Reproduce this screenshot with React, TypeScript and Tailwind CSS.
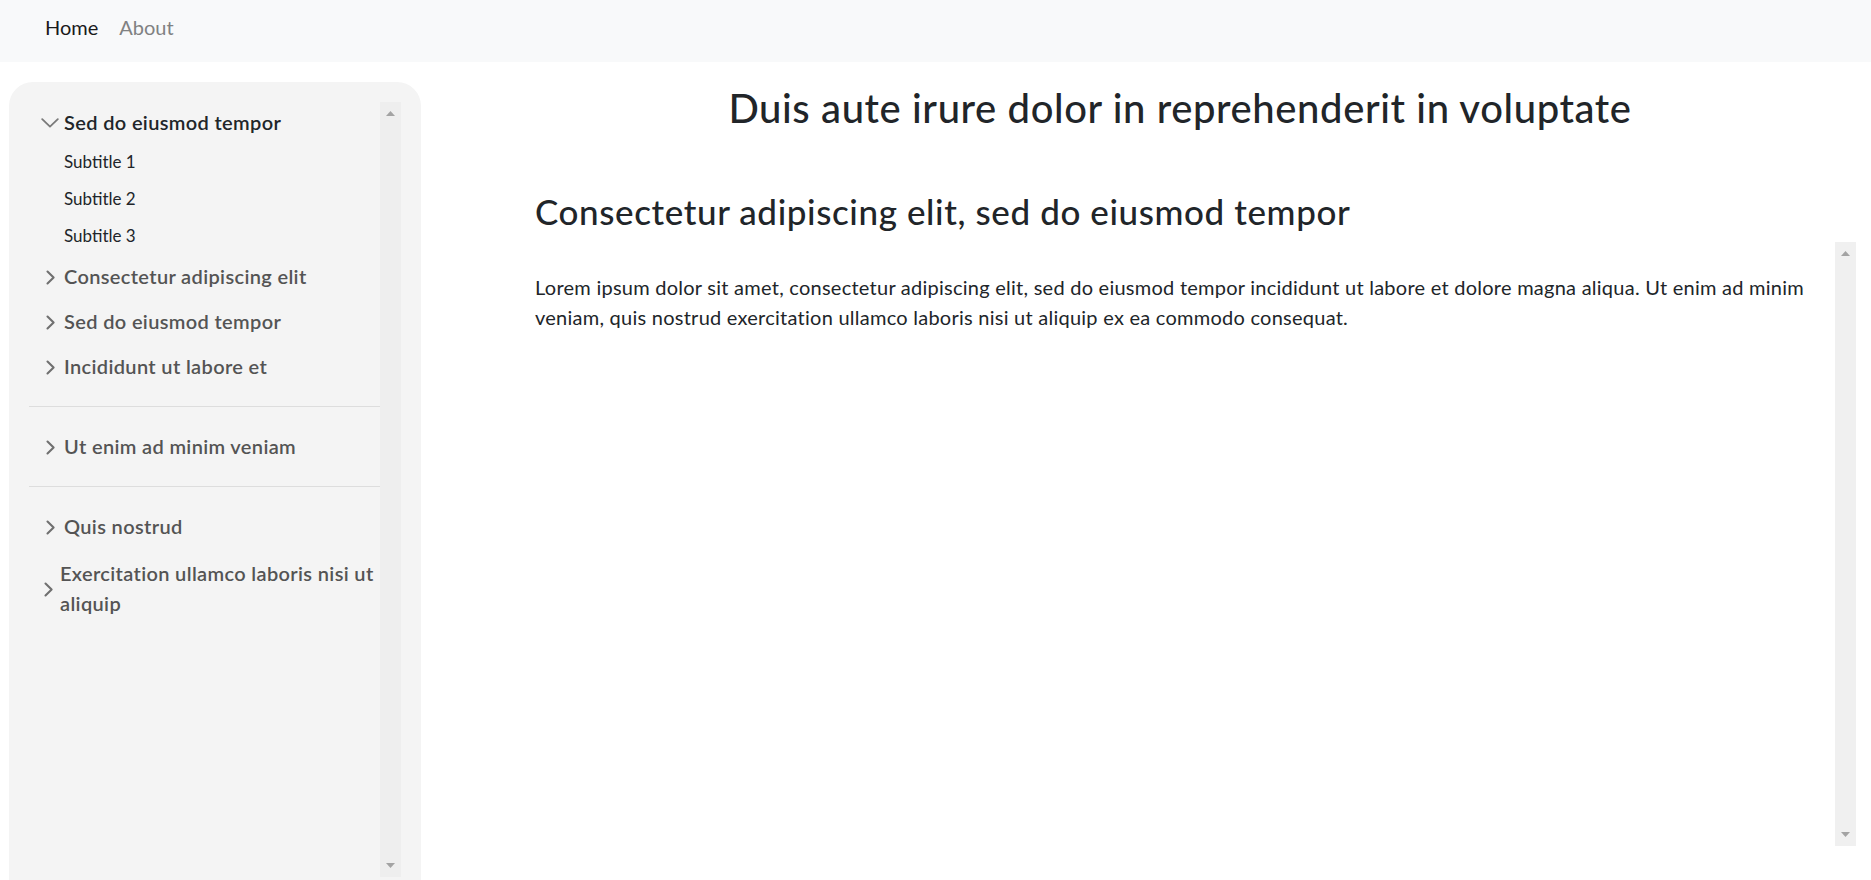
import React from "react";

function ChevronRight() {
  return (
    <svg width="11" height="15" viewBox="0 0 11 15" fill="none">
      <path d="M2.5 1.5 L8.6 7.5 L2.5 13.5" stroke="#707070" strokeWidth="2.1" strokeLinecap="round" strokeLinejoin="round" />
    </svg>
  );
}

function ChevronDown() {
  return (
    <svg width="18" height="10" viewBox="0 0 18 10" fill="none">
      <path d="M1.2 1.2 L9 8.6 L16.8 1.2" stroke="#7a7a7a" strokeWidth="1.8" strokeLinecap="round" strokeLinejoin="round" />
    </svg>
  );
}

function ArrowUp() {
  return (
    <svg width="9" height="5" viewBox="0 0 9 5">
      <polygon points="0,5 9,5 4.5,0" fill="#a3a3a3" />
    </svg>
  );
}

function ArrowDown() {
  return (
    <svg width="9" height="5" viewBox="0 0 9 5">
      <polygon points="0,0 9,0 4.5,5" fill="#a3a3a3" />
    </svg>
  );
}

function Item({ label, open = false }: { label: string; open?: boolean }) {
  return (
    <div className={`${open ? "h-[42px]" : "h-[45px]"} flex items-center pl-[11px] pb-[3px]`}>
      <span className="w-[20px] shrink-0 flex justify-center pt-[2px]">{open ? <ChevronDown /> : <ChevronRight />}</span>
      <span
        className={`ml-[4px] text-[20px] leading-[28px] tracking-[0.35px] font-semibold ${open ? "text-[#212529]" : "text-[#545454]"}`}
      >
        {label}
      </span>
    </div>
  );
}

function Sub({ label }: { label: string }) {
  return (
    <div className="h-[37px] flex items-center pl-[35px] pb-[2px] text-[17px] text-[#212529]">{label}</div>
  );
}

function Divider() {
  return <div className="mt-4 mb-[18px] h-px bg-[#dddddd]" />;
}

export default function App() {
  return (
    <div className="h-[880px] w-full overflow-hidden bg-white flex flex-col font-['Lato','Noto_Sans',sans-serif]">
      <nav className="h-[62px] shrink-0 bg-[#f8f9fa] flex items-start pl-[45px] pt-[12px] gap-[21px] text-[20px] leading-[30px]">
        <span className="text-[#1a1a1a]">Home</span>
        <span className="text-[#808182]">About</span>
      </nav>
      <div className="flex flex-1 min-h-0">
        <aside className="ml-[9px] mt-[20px] w-[412px] h-[815px] shrink-0 rounded-t-[24px] bg-[#f4f4f4] p-5 flex">
          <div className="flex-1 min-w-0">
            <Item label="Sed do eiusmod tempor" open />
            <Sub label="Subtitle 1" />
            <Sub label="Subtitle 2" />
            <Sub label="Subtitle 3" />
            <Item label="Consectetur adipiscing elit" />
            <Item label="Sed do eiusmod tempor" />
            <Item label="Incididunt ut labore et" />
            <Divider />
            <Item label="Ut enim ad minim veniam" />
            <Divider />
            <Item label="Quis nostrud" />
            <div className="flex items-center pl-[11px] pt-[8px] pb-[10px]">
              <span className="w-[20px] shrink-0 flex justify-start pl-[3px] pt-[2px]">
                <ChevronRight />
              </span>
              <span className="text-[20px] leading-[30px] tracking-[0.35px] font-semibold text-[#545454]">
                Exercitation ullamco laboris nisi ut
                <br />
                aliquip
              </span>
            </div>
          </div>
          <div className="w-[21px] shrink-0 bg-[#eeeeee] flex flex-col items-center justify-between py-[9px]">
            <ArrowUp />
            <ArrowDown />
          </div>
        </aside>
        <main className="flex-1 min-w-0 flex flex-col pl-[114px] pr-[15px] text-[#212529]">
          <h1 className="mt-[22px] mr-[31px] text-center text-[40px] leading-[48px] tracking-[0.6px] font-medium">
            Duis aute irure dolor in reprehenderit in voluptate
          </h1>
          <h2 className="mt-[60px] text-[35px] leading-[38px] tracking-[0.6px] font-medium">
            Consectetur adipiscing elit, sed do eiusmod tempor
          </h2>
          <div className="mt-[12px] h-[604px] flex">
            <div className="flex-1 min-w-0 pt-[30px] pr-[10px]">
              <p className="text-[20px] leading-[30px] tracking-[0.25px]">
                Lorem ipsum dolor sit amet, consectetur adipiscing elit, sed do eiusmod tempor incididunt ut labore et
                dolore magna aliqua. Ut enim ad minim veniam, quis nostrud exercitation ullamco laboris nisi ut aliquip ex
                ea commodo consequat.
              </p>
            </div>
            <div className="w-[21px] shrink-0 bg-[#f0f0f0] flex flex-col items-center justify-between py-[9px]">
              <ArrowUp />
              <ArrowDown />
            </div>
          </div>
        </main>
      </div>
    </div>
  );
}
